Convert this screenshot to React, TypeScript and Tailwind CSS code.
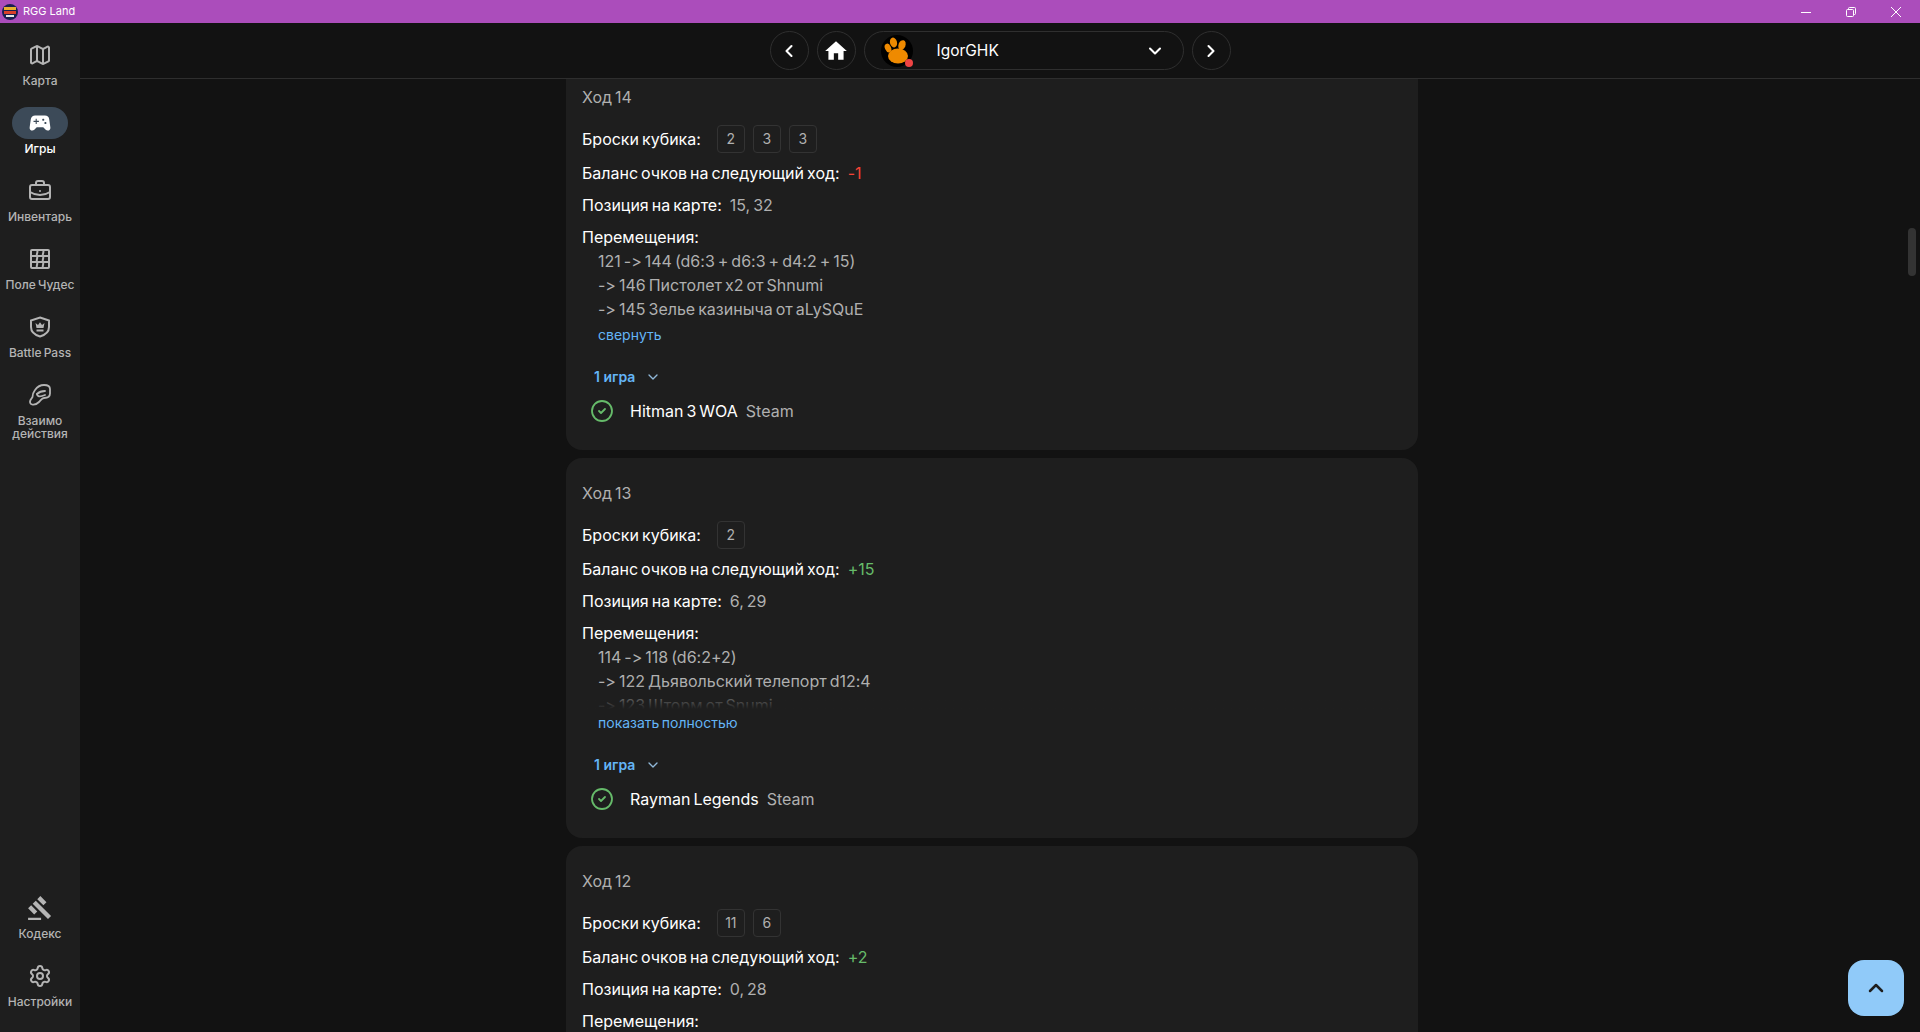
import React from 'react';
import { ChevronDown, ChevronLeft, ChevronRight, ChevronUp, Map as MapIcon, Settings, BriefcaseBusiness, CircleCheck } from 'lucide-react';
import { MdGavel, MdHome, MdSportsEsports } from 'react-icons/md';

const GridIcon = () => (
  <svg width="24" height="24" viewBox="0 0 24 24" fill="none" stroke="currentColor" strokeWidth="2">
    <rect x="3" y="3" width="18" height="18" rx="1" />
    <path d="M3 9h18M3 15h18" />
    <path d="M9 3c1.500 2-1 4 0 6s-1 4 0 6-1 4 0 6M15 3c1.500 2-1 4 0 6s-1 4 0 6-1 4 0 6" />
  </svg>
);

const ShieldCrownIcon = () => (
  <svg width="24" height="24" viewBox="0 0 24 24" fill="none" stroke="currentColor" strokeWidth="2">
    <path d="M12 2.500l9 3v6.500c0 4.600-3.900 8-9 9.500-5.100-1.500-9-4.900-9-9.500V5.500z" />
    <path d="M7.500 8l2.500 2 2-2.800 2 2.800 2.500-2-1 5H8.500z" fill="currentColor" stroke="none" />
    <path d="M8.500 15.500h7" />
  </svg>
);

const InteractIcon = () => (
  <svg width="24" height="24" viewBox="0 0 24 24" fill="none" stroke="currentColor" strokeWidth="1.800" strokeLinejoin="round" strokeLinecap="round">
    <path d="M7 7C9.500 3.500 13 2 16 2c3.500 0 6 1.500 6 4v4.500C22 13 20 15 16 15c-2 0-3 2-5 4-2 2-5 3-7 2.500-2-.5-2.500-2.500-1.500-4.500l2-3c0-3 1-5 2.500-7z" />
    <path d="M9 11c2-2 5-3 8-3" />
    <path d="M9 11c0 2 2 3 5 2l3-1" />
  </svg>
);

interface NavItemProps {
  icon: React.ReactNode;
  label: React.ReactNode;
  active?: boolean;
}

const NavItem: React.FC<NavItemProps> = ({ icon, label, active = false }) => (
  <div className="flex flex-col items-center h-[68px]">
    <div className={`flex items-center justify-center w-[56px] h-[32px] rounded-full ${active ? 'bg-[#3c4a58] text-white' : 'text-[#b4b4b4]'}`}>
      {icon}
    </div>
    <div className={`mt-[3px] text-center text-[12px] leading-[13px] font-medium [word-spacing:-1px] ${active ? 'text-white' : 'text-[#b4b4b4]'}`}>
      {label}
    </div>
  </div>
);

const Sidebar = () => (
  <div className="flex flex-col justify-between w-[80px] shrink-0 bg-[#1e1e1e] pt-[16px] pb-[4px]">
    <div className="flex flex-col">
      <NavItem icon={<MapIcon size={24} strokeWidth={2} />} label="Карта" />
      <NavItem icon={<MdSportsEsports size={26} />} label="Игры" active />
      <NavItem icon={<BriefcaseBusiness size={24} strokeWidth={2} />} label="Инвентарь" />
      <NavItem icon={<GridIcon />} label="Поле Чудес" />
      <NavItem icon={<ShieldCrownIcon />} label="Battle Pass" />
      <NavItem icon={<InteractIcon />} label={<>Взаимо<br />действия</>} />
    </div>
    <div className="flex flex-col">
      <NavItem icon={<MdGavel size={26} />} label="Кодекс" />
      <NavItem icon={<Settings size={24} strokeWidth={2} />} label="Настройки" />
    </div>
  </div>
);

const RoundButton: React.FC<{ children: React.ReactNode }> = ({ children }) => (
  <div className="flex items-center justify-center w-[39px] h-[39px] rounded-full border border-[#2f2f2f] text-white">
    {children}
  </div>
);

const Header = () => (
  <div className="flex items-center justify-center gap-[8px] h-[56px] shrink-0 bg-[#121212] border-b border-[#2e2e2e] relative z-10">
    <RoundButton><ChevronLeft size={20} strokeWidth={2.500} /></RoundButton>
    <RoundButton><MdHome size={26} /></RoundButton>
    <div className="flex items-center w-[320px] h-[39px] rounded-full border border-[#2f2f2f] pl-[16px] pr-[18px]">
      <div className="relative w-[32px] h-[32px] rounded-full bg-black shrink-0">
        <svg width="32" height="32" viewBox="0 0 32 32" fill="#ef8a00">
          <ellipse cx="7" cy="13" rx="3" ry="4.500" transform="rotate(-25 7 13)" />
          <ellipse cx="12.500" cy="7.500" rx="3.500" ry="5" transform="rotate(-15 12.500 7.500)" />
          <ellipse cx="21" cy="10" rx="3.500" ry="5" transform="rotate(20 21 10)" />
          <ellipse cx="17" cy="21" rx="10" ry="7.500" />
        </svg>
        <div className="absolute right-0 bottom-0 w-[8px] h-[8px] rounded-full bg-[#ef4444]" />
      </div>
      <span className="ml-[24px] text-[15.5px] text-white">IgorGHK</span>
      <ChevronDown size={20} strokeWidth={2.500} className="ml-auto text-white" />
    </div>
    <RoundButton><ChevronRight size={20} strokeWidth={2.500} /></RoundButton>
  </div>
);

interface TurnProps {
  turn: number;
  dice: number[];
  balance: string;
  position: string;
  moves: string[];
  expanded?: boolean;
  game?: string;
  platform?: string;
}

const TurnCard: React.FC<TurnProps> = ({ turn, dice, balance, position, moves, expanded = false, game, platform }) => (
  <div className="shrink-0 bg-[#1e1e1e] rounded-[16px] px-[16px] pt-[23px] pb-[27px] text-[16px] leading-[24px] [font-variant-ligatures:no-contextual] [word-spacing:-1.5px]">
    <div className="text-[#b0b0b0]">Ход {turn}</div>
    <div className="flex items-center mt-[16px] h-[28px] text-white">
      <span>Броски кубика:</span>
      <div className="flex gap-[8px] ml-[16px]">
        {dice.map((d, i) => (
          <div key={i} className="flex items-center justify-center w-[28px] h-[28px] rounded-[4px] border border-[#333333] text-[14px] text-[#b0b0b0]">{d}</div>
        ))}
      </div>
    </div>
    <div className="mt-[8px] text-white">
      Баланс очков на следующий ход:
      <span className={`ml-[8px] ${balance.startsWith('+') ? 'text-[#66bb6a]' : 'text-[#f44336]'}`}>{balance}</span>
    </div>
    <div className="mt-[8px] text-white">
      Позиция на карте:
      <span className="ml-[8px] text-[#b0b0b0]">{position}</span>
    </div>
    <div className="mt-[8px] text-white">Перемещения:</div>
    <div className={`relative pl-[16px] text-[#b0b0b0] overflow-hidden ${expanded ? '' : 'h-[64px]'}`}>
      {moves.map((m, i) => <div key={i}>{m}</div>)}
      {!expanded && <div className="absolute left-0 right-0 bottom-0 h-[24px] bg-gradient-to-b from-transparent to-[#1e1e1e]" />}
    </div>
    <div className="mt-[4px] pl-[16px] text-[14px] leading-[20px] text-[#64b5f6]">
      {expanded ? 'свернуть' : 'показать полностью'}
    </div>
    {game && (
      <>
        <div className="flex items-center mt-[22px] pl-[12px] h-[20px] text-[14px] font-semibold text-[#64b5f6] [word-spacing:0]">
          1 игра
          <ChevronDown size={16} strokeWidth={2} className="ml-[10px] text-[#90b8d8]" />
        </div>
        <div className="flex items-center mt-[12px] pl-[8px] h-[24px]">
          <CircleCheck size={24} strokeWidth={1.800} className="text-[#66bb6a]" />
          <span className="ml-[16px] text-white">{game}</span>
          <span className="ml-[8px] text-[#b0b0b0]">{platform}</span>
        </div>
      </>
    )}
  </div>
);

const WindowBar = () => (
  <div className="flex items-center h-[23px] shrink-0 bg-[#ab4dbb] text-white">
    <svg width="18" height="18" viewBox="0 0 18 18" className="ml-[1px]">
      <circle cx="9" cy="9" r="8" fill="#1a2050" />
      <rect x="3" y="4" width="12" height="3" fill="#e8b030" />
      <rect x="3" y="8" width="12" height="3" fill="#d9402a" />
      <rect x="5" y="12" width="8" height="2" fill="#e8e8e8" />
    </svg>
    <span className="ml-[4px] text-[11px] leading-[23px]">RGG Land</span>
    <div className="ml-auto flex items-center gap-[35px] pr-[19px]">
      <svg width="10" height="10" viewBox="0 0 10 10" stroke="white" fill="none"><path d="M0 5.500h10" /></svg>
      <svg width="10" height="10" viewBox="0 0 10 10" stroke="white" fill="none"><rect x="0.500" y="2.500" width="7" height="7" rx="1" /><path d="M2.500 2.500v-1a1 1 0 011-1h5a1 1 0 011 1v5a1 1 0 01-1 1h-1" /></svg>
      <svg width="10" height="10" viewBox="0 0 10 10" stroke="white" fill="none"><path d="M0 0l10 10M10 0L0 10" /></svg>
    </div>
  </div>
);

export default function App() {
  return (
    <div className="flex flex-col h-screen overflow-hidden bg-[#121212] font-['Inter',sans-serif]">
      <WindowBar />
      <div className="flex flex-1 min-h-0">
        <Sidebar />
        <div className="relative flex flex-col flex-1 min-w-0">
          <Header />
          <div className="flex-1 min-h-0 overflow-hidden">
            <div className="flex flex-col gap-[8px] w-[852px] ml-[486px] -mt-[17px]">
              <TurnCard turn={14} dice={[2, 3, 3]} balance="-1" position="15, 32" expanded
                moves={['121 -> 144 (d6:3 + d6:3 + d4:2 + 15)', '-> 146 Пистолет x2 от Shnumi', '-> 145 Зелье казиныча от aLySQuE']}
                game="Hitman 3 WOA" platform="Steam" />
              <TurnCard turn={13} dice={[2]} balance="+15" position="6, 29"
                moves={['114 -> 118 (d6:2+2)', '-> 122 Дьявольский телепорт d12:4', '-> 123 Шторм от Snumi']}
                game="Rayman Legends" platform="Steam" />
              <TurnCard turn={12} dice={[11, 6]} balance="+2" position="0, 28" moves={[]} />
            </div>
          </div>
          <div className="absolute top-[205px] right-[4px] w-[8px] h-[48px] rounded-full bg-[#333333]" />
          <div className="absolute bottom-[16px] right-[16px] flex items-center justify-center w-[56px] h-[56px] rounded-[16px] bg-[#90caf9] text-[#1e1e1e]">
            <ChevronUp size={24} strokeWidth={2.500} />
          </div>
        </div>
      </div>
    </div>
  );
}
